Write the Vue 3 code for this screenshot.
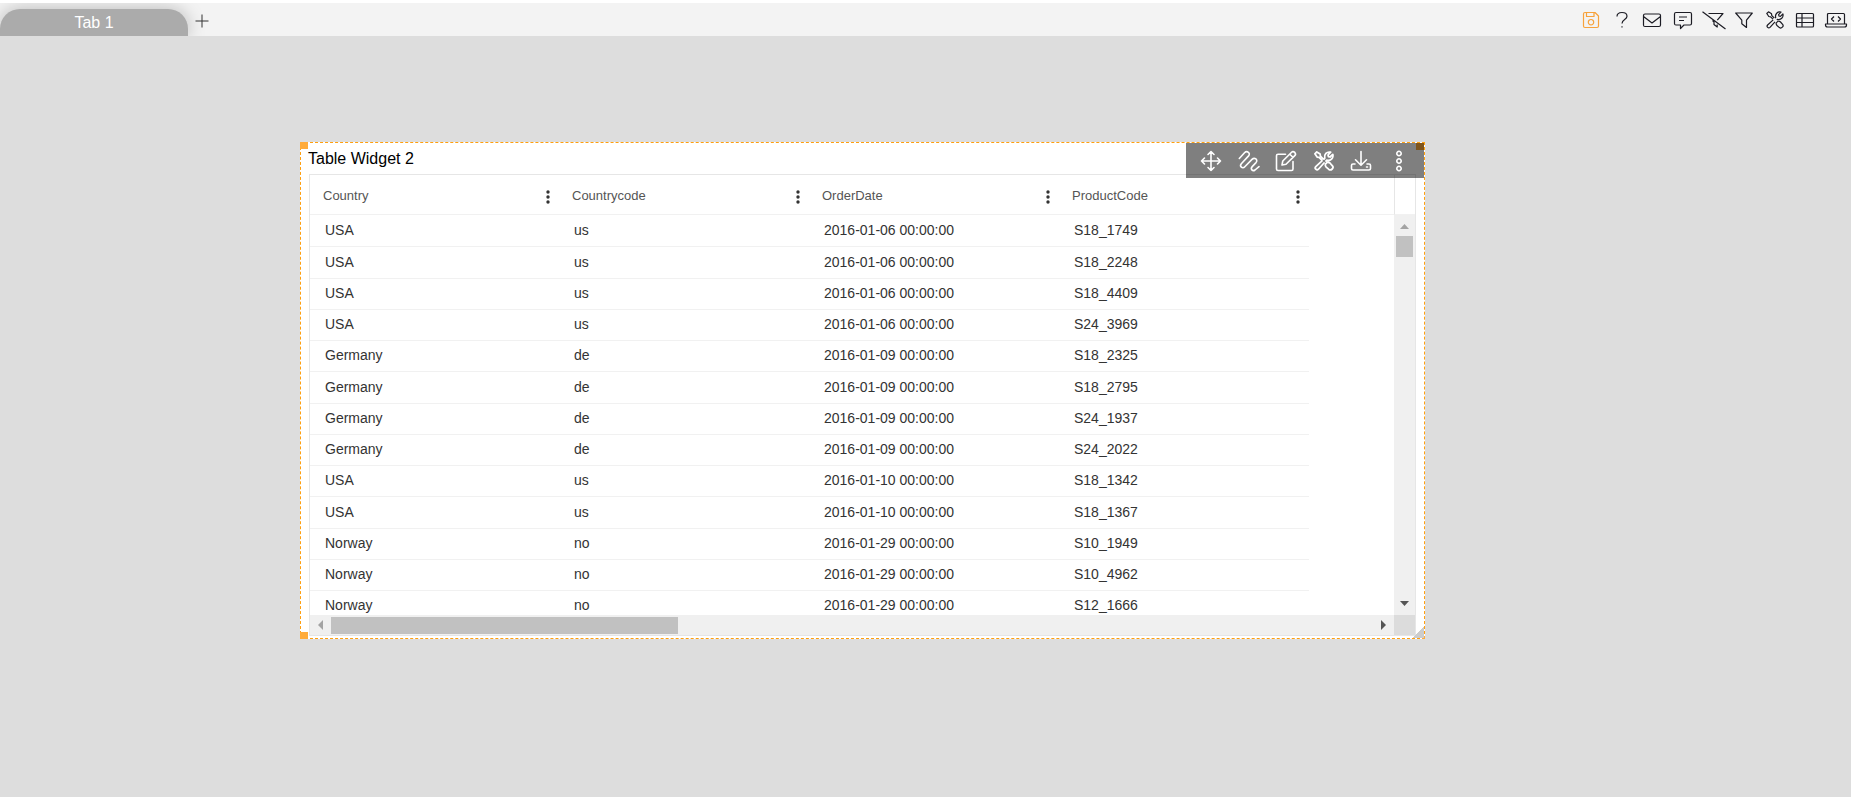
<script setup>
const columns = ['Country', 'Countrycode', 'OrderDate', 'ProductCode']
const rows = [
  ['USA', 'us', '2016-01-06 00:00:00', 'S18_1749'],
  ['USA', 'us', '2016-01-06 00:00:00', 'S18_2248'],
  ['USA', 'us', '2016-01-06 00:00:00', 'S18_4409'],
  ['USA', 'us', '2016-01-06 00:00:00', 'S24_3969'],
  ['Germany', 'de', '2016-01-09 00:00:00', 'S18_2325'],
  ['Germany', 'de', '2016-01-09 00:00:00', 'S18_2795'],
  ['Germany', 'de', '2016-01-09 00:00:00', 'S24_1937'],
  ['Germany', 'de', '2016-01-09 00:00:00', 'S24_2022'],
  ['USA', 'us', '2016-01-10 00:00:00', 'S18_1342'],
  ['USA', 'us', '2016-01-10 00:00:00', 'S18_1367'],
  ['Norway', 'no', '2016-01-29 00:00:00', 'S10_1949'],
  ['Norway', 'no', '2016-01-29 00:00:00', 'S10_4962'],
  ['Norway', 'no', '2016-01-29 00:00:00', 'S12_1666'],
]
const toolsPath =
  'M8.2 7 5.8 4.6 5.5 2.8 2.5 .8 .8 2.5 2.8 5.5 4.6 5.8 7 8.2M11.8 10.3C13 9.8 13.8 10.3 14.5 11L16.6 13.4C18.2 15.2 15.4 18 13.4 16.6L11 14.5C10.2 13.6 9.8 13 10.3 11.8ZM7.2 8.9 1.6 14C.1 15.6 2.4 17.9 4 16.4L9 10.8M9 7.2 9.7 6.5C8.8 3.2 11.5 .2 15 1.1L12.6 3.6 13 5 14.4 5.4 16.9 3C17.8 6.5 14.8 9.2 11.5 8.3L10.8 9'
const actions = [
  { name: 'Save', cls: 'save', d: 'M1.5 3Q1.5 1.5 3 1.5H13L16.5 5V15Q16.5 16.5 15 16.5H3Q1.5 16.5 1.5 15ZM4.5 1.5V5.5H12V1.5M11.7 11.2A2.7 2.7 0 1 1 6.3 11.2A2.7 2.7 0 1 1 11.7 11.2' },
  { name: 'Help', d: 'M4 5.5C4 3 5.5 1.5 9 1.5S14 3 14 5.3C14 8.8 9 8.3 9 12.5M9 15.2V16.6' },
  { name: 'Mail', d: 'M.5 4.5Q.5 3 2 3H16Q17.5 3 17.5 4.5V14Q17.5 15.5 16 15.5H2Q.5 15.5 .5 14ZM.5 5.5 9 12 17.5 5.5' },
  { name: 'Comments', d: 'M.5 3Q.5 1.5 2 1.5H16Q17.5 1.5 17.5 3V12.5Q17.5 14 16 14H10L6.5 17.5V14H2Q.5 14 .5 12.5ZM5 6H13M5 9.5H10' },
  { name: 'Clear filters', d: 'M-2.5 .8 20.5 18M3.5 2.5H18L12.3 9.2M7.5 9.5 9 11V13.5L12.2 16V13.5' },
  { name: 'Filter', d: 'M.7 2H17.3L11.5 9.2V16.5L6.8 12.8V9.2Z' },
  { name: 'Tools', d: toolsPath },
  { name: 'Data', d: 'M.5 3.5Q.5 2.5 1.5 2.5H16.5Q17.5 2.5 17.5 3.5V15Q17.5 16 16.5 16H1.5Q.5 16 .5 15ZM.5 7H17.5M.5 11.5H17.5M6 2.5V16' },
  { name: 'Code', d: 'M.5 12.5V3.5Q.5 2.5 1.5 2.5H16.5Q17.5 2.5 17.5 3.5V12.5M-1.5 13H19.5V14Q19.5 16 17.5 16H.5Q-1.5 16-1.5 14ZM7 5.5 4.5 8 7 10.5M11 5.5 13.5 8 11 10.5' },
]
const widgetTools = [
  { name: 'Move', d: 'M10 .5V19.5M.5 10H19.5M7 3.5 10 .5 13 3.5M7 16.5 10 19.5 13 16.5M3.5 7 .5 10 3.5 13M16.5 7 19.5 10 16.5 13' },
  { name: 'Format', d: 'M.3 7.5 5.5 1.8C8-.8 12 2 9.6 4.9L2.3 12.7C.2 15.2 3.4 18.4 5.8 15.8L13 8.4C15.6 5.8 19.4 8.8 17 11.6L13.2 15.6C11 18 13.6 20.8 16 19L20 15.6' },
  { name: 'Edit', d: 'M9.5 3.2H2Q.5 3.2 .5 4.7V18Q.5 19.5 2 19.5H15.5Q17 19.5 17 18V10.5M6 14 6.8 10 15.6 1.2Q17-.2 18.8 1.4 20.3 3.2 18.8 4.6L10 13.2ZM13.8 3.2 17 6.3' },
  { name: 'Configure', d: toolsPath, box: '0 0 18 18' },
  { name: 'Download', d: 'M10 .5V14M4.5 8.8 10 14.2 15.5 8.8M4 13H2Q.5 13 .5 14.5V17.5Q.5 19 2 19H18Q19.5 19 19.5 17.5V14.5Q19.5 13 18 13H16M15.5 16H16.5' },
  { name: 'More', d: 'M12.2 2.5A2.2 2.2 0 1 1 7.8 2.5A2.2 2.2 0 1 1 12.2 2.5M12.2 10A2.2 2.2 0 1 1 7.8 10A2.2 2.2 0 1 1 12.2 10M12.2 17.5A2.2 2.2 0 1 1 7.8 17.5A2.2 2.2 0 1 1 12.2 17.5' },
]
</script>

<template>
  <div class="page">
    <header class="topbar">
      <button class="tab">Tab 1</button>
      <button class="add" aria-label="Add tab">
        <svg viewBox="0 0 14 14"><path d="M7 .5V13.5M.5 7H13.5" /></svg>
      </button>
      <nav class="actions">
        <button v-for="a in actions" :key="a.name" :class="a.cls" :aria-label="a.name">
          <svg viewBox="0 0 18 18"><path :d="a.d" /></svg>
        </button>
      </nav>
    </header>

    <main class="canvas">
      <section class="widget">
        <h2>Table Widget 2</h2>
        <div class="grid">
          <div class="viewport">
            <table>
              <thead>
                <tr>
                  <th v-for="c in columns" :key="c" scope="col">
                    <div class="head">
                      <span>{{ c }}</span>
                      <button class="menu" :aria-label="c + ' menu'">
                        <svg viewBox="0 0 4 14"><circle cx="2" cy="2" r="1.7" /><circle cx="2" cy="7" r="1.7" /><circle cx="2" cy="12" r="1.7" /></svg>
                      </button>
                    </div>
                  </th>
                  <th class="rest"></th>
                </tr>
              </thead>
              <tbody>
                <tr v-for="(r, i) in rows" :key="i">
                  <td v-for="(v, j) in r" :key="j">{{ v }}</td>
                  <td class="rest"></td>
                </tr>
              </tbody>
            </table>
          </div>
          <div class="vside">
            <div class="vhead"></div>
            <div class="vbar">
              <svg class="up" viewBox="0 0 9 5"><path d="M0 5 4.5 0 9 5Z" /></svg>
              <div class="vthumb"></div>
              <svg class="down" viewBox="0 0 9 5"><path d="M0 0H9L4.5 5Z" /></svg>
            </div>
          </div>
          <div class="hbar">
            <svg class="left" viewBox="0 0 5 10"><path d="M5 0V10L0 5Z" /></svg>
            <div class="hthumb"></div>
            <svg class="right" viewBox="0 0 5 10"><path d="M0 0V10L5 5Z" /></svg>
          </div>
          <div class="corner"></div>
        </div>
        <i class="handle tl"></i>
        <i class="handle tr"></i>
        <i class="handle bl"></i>
        <i class="handle br"></i>
        <i class="grip"></i>
        <div class="tools">
          <button v-for="t in widgetTools" :key="t.name" :aria-label="t.name">
            <svg :viewBox="t.box || '0 0 20 20'"><path :d="t.d" /></svg>
          </button>
        </div>
      </section>
    </main>
  </div>
</template>

<style>
body {
  margin: 0;
  background: #ddd;
}
</style>

<style scoped>
.page {
  min-height: 100vh;
  display: flex;
  flex-direction: column;
  background: #ddd;
  font-family: "Liberation Sans", Arial, sans-serif;
  overflow: hidden;
}
button {
  border: 0;
  padding: 0;
  margin: 0;
  background: none;
  font: inherit;
  color: inherit;
  display: block;
}
svg {
  display: block;
  fill: none;
  stroke: currentColor;
  overflow: visible;
}
.topbar {
  display: flex;
  align-items: flex-end;
  height: 33px;
  border-top: 3px solid #fff;
  background: #f3f3f3;
  overflow: hidden;
}
.tab {
  width: 188px;
  height: 27px;
  border-radius: 20px 20px 0 0;
  background: #ababab;
  color: #fff;
  font-size: 16px;
  line-height: 27px;
  box-shadow: 0 0 18px rgba(0, 0, 0, 0.25);
}
.add {
  margin: 0 0 8px 7px;
  color: #333;
}
.add svg {
  width: 14px;
  height: 14px;
}
.actions {
  margin-left: auto;
  width: 263px;
  height: 33px;
  display: flex;
  align-items: center;
  justify-content: space-between;
  padding-right: 6px;
  color: #1c1c24;
}
.actions svg {
  width: 18px;
  height: 18px;
  stroke-width: 1.2;
  stroke-linejoin: round;
}
.actions .save {
  color: #f7a23b;
}
.canvas {
  padding: 106px 0 0 300px;
}
.widget {
  position: relative;
  box-sizing: border-box;
  width: 73%;
  max-width: 1125px;
  border: 1px dashed #ff9f0e;
  background: #fff;
  padding: 0 8px 2px 8px;
}
h2 {
  margin: 0 0 0 -1px;
  font-size: 16px;
  font-weight: 400;
  line-height: 31px;
  color: #000;
}
.grid {
  display: grid;
  grid-template-columns: minmax(0, 1fr) 21px;
  border: 1px solid #e6e6e6;
}
.viewport {
  height: 440px;
  overflow: hidden;
}
table {
  width: 100%;
  table-layout: fixed;
  border-collapse: separate;
  border-spacing: 0;
}
th,
td {
  box-sizing: border-box;
  width: 250px;
  text-align: left;
  font-weight: 400;
  border-bottom: 1px solid #f1f1f1;
}
th:first-child {
  width: 249px;
}
th {
  height: 40px;
  padding: 0 9px 0 13px;
  font-size: 13px;
  color: #555;
}
td {
  height: 31px;
  padding: 0 0 2px 15px;
  font-size: 14px;
  line-height: 16px;
  color: #333;
}
tbody tr:first-child td,
tbody tr:nth-child(4n + 2) td {
  height: 32px;
}
.rest {
  width: auto;
  padding: 0;
}
td.rest {
  border-bottom: 0;
}
.head {
  display: flex;
  align-items: center;
  justify-content: space-between;
  padding-top: 2px;
}
.head span {
  padding-bottom: 1px;
}
.menu {
  padding-top: 3px;
}
.menu svg {
  width: 4px;
  height: 14px;
  fill: #333;
  stroke: none;
}
.vside {
  display: flex;
  flex-direction: column;
}
.vhead {
  box-sizing: border-box;
  height: 40px;
  border-left: 1px solid #e6e6e6;
  border-bottom: 1px solid #f1f1f1;
}
.vbar {
  flex: 1;
  display: flex;
  flex-direction: column;
  align-items: center;
  background: #f0f0f0;
}
.vbar svg,
.hbar svg {
  fill: #555;
  stroke: none;
}
.vbar svg {
  width: 9px;
  height: 5px;
}
.hbar svg {
  width: 5px;
  height: 10px;
}
.vbar .up,
.hbar .left {
  fill: #a3a3a3;
}
.up {
  margin: 9px 0 7px;
}
.vthumb {
  width: 17px;
  height: 21px;
  background: #c1c1c1;
}
.down {
  margin: auto 0 9px;
}
.hbar {
  display: flex;
  align-items: center;
  height: 20px;
  padding: 0 8px;
  background: #f0f0f0;
}
.hthumb {
  width: 32.5%;
  height: 17px;
  margin-left: 8px;
  background: #c1c1c1;
}
.right {
  margin-left: auto;
}
.corner {
  background: #dcdcdc;
}
.handle {
  position: absolute;
  width: 8px;
  height: 7px;
  background: #ffab3a;
}
.tl {
  left: -1px;
  top: -1px;
}
.tr {
  right: 0;
  top: 0;
}
.bl {
  left: -1px;
  bottom: -1px;
}
.br {
  right: -1px;
  bottom: -1px;
  width: 3px;
  height: 3px;
}
.grip {
  position: absolute;
  right: 0;
  bottom: 0;
  width: 12px;
  height: 12px;
  background: linear-gradient(135deg, transparent 50%, #ccc 50%);
}
.tools {
  position: absolute;
  box-sizing: border-box;
  right: 0;
  top: 0;
  width: 238px;
  height: 35px;
  display: flex;
  align-items: center;
  justify-content: space-between;
  padding: 0 15px;
  background: rgba(0, 0, 0, 0.5);
  color: #fff;
}
.tools svg {
  width: 20px;
  height: 20px;
  stroke-width: 1.6;
  stroke-linejoin: round;
  stroke-linecap: round;
}
</style>
